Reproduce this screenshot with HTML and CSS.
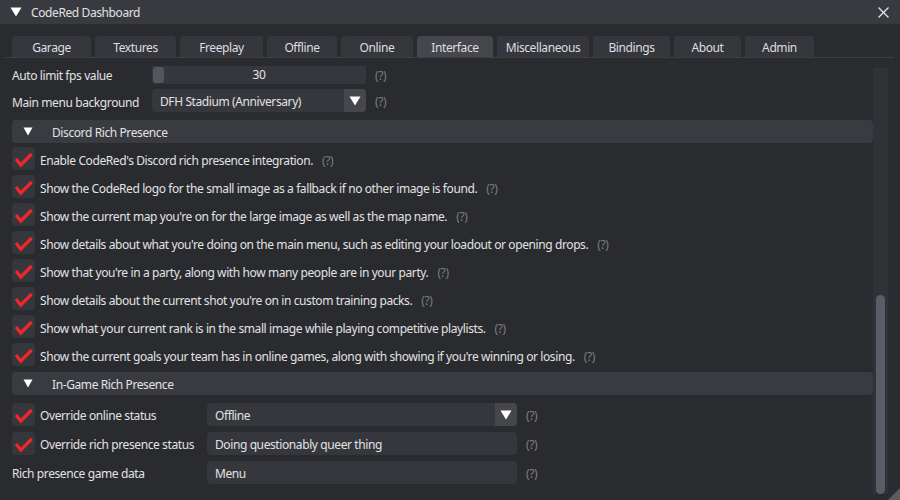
FILE: index.html
```html
<!DOCTYPE html>
<html>
<head>
<meta charset="utf-8">
<link rel="stylesheet" href="styles.css">
</head>
<body>
<div class="window">
  <div class="titlebar">
    <svg class="title-arrow" width="12" height="10" viewBox="0 0 12 10"><polygon points="0.5,0.5 11.5,0.5 6,9.5" fill="#ffffff"/></svg>
    <span class="title-text">CodeRed Dashboard</span>
    <svg class="close" width="11" height="11" viewBox="0 0 11 11"><path d="M0.5 0.5 L10.5 10.5 M10.5 0.5 L0.5 10.5" stroke="#e6e6e6" stroke-width="1.3"/></svg>
  </div>
  <div class="tabbar">
    <div class="tab t1">Garage</div>
    <div class="tab t2">Textures</div>
    <div class="tab t3">Freeplay</div>
    <div class="tab t4">Offline</div>
    <div class="tab t5">Online</div>
    <div class="tab t6 active">Interface</div>
    <div class="tab t7">Miscellaneous</div>
    <div class="tab t8">Bindings</div>
    <div class="tab t9">About</div>
    <div class="tab t10">Admin</div>
  </div>
  <div class="body">
    <div class="viewport">
      <div class="rows">
        <div class="row row-slider">
          <span class="label col1 short">Auto limit fps value</span>
          <div class="frame slider">
            <div class="grab"></div>
            <span class="slider-value">30</span>
          </div>
          <span class="help">(?)</span>
        </div>
        <div class="row row-combo">
          <span class="label col1">Main menu background</span>
          <div class="frame combo small">
            <span class="frame-text">DFH Stadium (Anniversary)</span>
            <div class="combo-btn"><svg width="12" height="10" viewBox="0 0 12 10"><polygon points="0.5,0.5 11.5,0.5 6,9.5" fill="#ffffff"/></svg></div>
          </div>
          <span class="help">(?)</span>
        </div>

        <div class="header h1">
          <svg class="hdr-arrow" width="10" height="9" viewBox="0 0 10 9"><polygon points="0.5,0.5 9.5,0.5 5,8.5" fill="#ffffff"/></svg>
          <span>Discord Rich Presence</span>
        </div>

        <div class="row cb-row first">
          <span class="checkbox"><svg width="23" height="23" viewBox="0 0 23 23"><polyline points="4,12 8.7,18 19.7,7" fill="none" stroke="#f0262b" stroke-width="3.2"/></svg></span>
          <span class="label">Enable CodeRed's Discord rich presence integration.</span>
          <span class="help">(?)</span>
        </div>
        <div class="row cb-row">
          <span class="checkbox"><svg width="23" height="23" viewBox="0 0 23 23"><polyline points="4,12 8.7,18 19.7,7" fill="none" stroke="#f0262b" stroke-width="3.2"/></svg></span>
          <span class="label">Show the CodeRed logo for the small image as a fallback if no other image is found.</span>
          <span class="help">(?)</span>
        </div>
        <div class="row cb-row">
          <span class="checkbox"><svg width="23" height="23" viewBox="0 0 23 23"><polyline points="4,12 8.7,18 19.7,7" fill="none" stroke="#f0262b" stroke-width="3.2"/></svg></span>
          <span class="label">Show the current map you're on for the large image as well as the map name.</span>
          <span class="help">(?)</span>
        </div>
        <div class="row cb-row">
          <span class="checkbox"><svg width="23" height="23" viewBox="0 0 23 23"><polyline points="4,12 8.7,18 19.7,7" fill="none" stroke="#f0262b" stroke-width="3.2"/></svg></span>
          <span class="label">Show details about what you're doing on the main menu, such as editing your loadout or opening drops.</span>
          <span class="help">(?)</span>
        </div>
        <div class="row cb-row">
          <span class="checkbox"><svg width="23" height="23" viewBox="0 0 23 23"><polyline points="4,12 8.7,18 19.7,7" fill="none" stroke="#f0262b" stroke-width="3.2"/></svg></span>
          <span class="label">Show that you're in a party, along with how many people are in your party.</span>
          <span class="help">(?)</span>
        </div>
        <div class="row cb-row">
          <span class="checkbox"><svg width="23" height="23" viewBox="0 0 23 23"><polyline points="4,12 8.7,18 19.7,7" fill="none" stroke="#f0262b" stroke-width="3.2"/></svg></span>
          <span class="label">Show details about the current shot you're on in custom training packs.</span>
          <span class="help">(?)</span>
        </div>
        <div class="row cb-row">
          <span class="checkbox"><svg width="23" height="23" viewBox="0 0 23 23"><polyline points="4,12 8.7,18 19.7,7" fill="none" stroke="#f0262b" stroke-width="3.2"/></svg></span>
          <span class="label">Show what your current rank is in the small image while playing competitive playlists.</span>
          <span class="help">(?)</span>
        </div>
        <div class="row cb-row">
          <span class="checkbox"><svg width="23" height="23" viewBox="0 0 23 23"><polyline points="4,12 8.7,18 19.7,7" fill="none" stroke="#f0262b" stroke-width="3.2"/></svg></span>
          <span class="label">Show the current goals your team has in online games, along with showing if you're winning or losing.</span>
          <span class="help">(?)</span>
        </div>

        <div class="header h2">
          <svg class="hdr-arrow" width="10" height="9" viewBox="0 0 10 9"><polygon points="0.5,0.5 9.5,0.5 5,8.5" fill="#ffffff"/></svg>
          <span>In-Game Rich Presence</span>
        </div>

        <div class="row field-row fr1">
          <div class="col2">
            <span class="checkbox"><svg width="23" height="23" viewBox="0 0 23 23"><polyline points="4,12 8.7,18 19.7,7" fill="none" stroke="#f0262b" stroke-width="3.2"/></svg></span>
            <span class="label">Override online status</span>
          </div>
          <div class="frame combo wide">
            <span class="frame-text">Offline</span>
            <div class="combo-btn"><svg width="12" height="10" viewBox="0 0 12 10"><polygon points="0.5,0.5 11.5,0.5 6,9.5" fill="#ffffff"/></svg></div>
          </div>
          <span class="help">(?)</span>
        </div>
        <div class="row field-row">
          <div class="col2">
            <span class="checkbox"><svg width="23" height="23" viewBox="0 0 23 23"><polyline points="4,12 8.7,18 19.7,7" fill="none" stroke="#f0262b" stroke-width="3.2"/></svg></span>
            <span class="label">Override rich presence status</span>
          </div>
          <div class="frame wide">
            <span class="frame-text">Doing questionably queer thing</span>
          </div>
          <span class="help">(?)</span>
        </div>
        <div class="row field-row">
          <div class="col2">
            <span class="label">Rich presence game data</span>
          </div>
          <div class="frame wide">
            <span class="frame-text">Menu</span>
          </div>
          <span class="help">(?)</span>
        </div>
      </div>
    </div>
    <div class="scrollbar">
      <div class="thumb"></div>
    </div>
  </div>
  <svg class="grip" width="12" height="12" viewBox="0 0 12 12"><polygon points="12,0 12,12 0,12" fill="#5c5d64"/></svg>
</div>
</body>
</html>
```
FILE: styles.css
```css
* {
  box-sizing: border-box;
}

html, body {
  margin: 0;
  padding: 0;
  background: #2a2b2f;
}

body {
  font-family: "Noto Sans", "Open Sans", sans-serif;
  font-size: 12px;
  letter-spacing: -0.4px;
  color: #e2e2e4;
}

.window {
  position: relative;
  width: 900px;
  height: 500px;
  background: #2a2b2f;
  overflow: hidden;
}

.titlebar {
  height: 24px;
  background: #393a40;
  display: flex;
  align-items: center;
  padding-left: 10px;
  padding-right: 11px;
}

.title-arrow {
  display: block;
}

.title-text {
  margin-left: 9px;
  flex: 1;
  line-height: 24px;
  padding-top: 1px;
}

.close {
  display: block;
}

.tabbar {
  margin: 12px 6px 0 4px;
  padding-left: 8px;
  display: flex;
  gap: 4px;
  border-bottom: 1px solid #3d3e44;
  height: 22px;
}

.tab {
  height: 21px;
  background: #36373c;
  border-radius: 4px 4px 0 0;
  display: flex;
  align-items: center;
  justify-content: center;
  line-height: 21px;
  padding-top: 1px;
  color: #dedee0;
}

.tab.active {
  background: #46474d;
}

.t1 { width: 79px; }
.t2 { width: 81px; }
.t3 { width: 83px; }
.t4 { width: 70px; }
.t5 { width: 72px; }
.t6 { width: 76px; }
.t7 { width: 92px; }
.t8 { width: 77px; }
.t9 { width: 67px; }
.t10 { width: 69px; }

.body {
  display: flex;
  margin-top: 8px;
  height: 431px;
}

.viewport {
  flex: 1;
  overflow: hidden;
  padding-left: 12px;
}

.rows {
  margin-top: -5px;
}

.row {
  display: flex;
  align-items: center;
  height: 23px;
}

.label {
  white-space: nowrap;
  line-height: 23px;
  padding-top: 2px;
}

.label.short {
  line-height: 16px;
  margin-top: 6px;
  padding-top: 0;
}

.row-combo .label {
  padding-top: 4px;
}

.col1 {
  width: 140px;
}

.frame {
  position: relative;
  height: 23px;
  background: #36373c;
  border-radius: 4px;
  display: flex;
  align-items: center;
}

.frame-text {
  padding-left: 8px;
  padding-top: 1px;
  flex: 1;
  white-space: nowrap;
}

.row-combo .frame-text {
  padding-top: 2px;
}

.slider {
  width: 214px;
  justify-content: center;
}

.grab {
  position: absolute;
  left: 1px;
  top: 6px;
  width: 11px;
  height: 16px;
  background: #55565d;
  border-radius: 3px;
}

.slider-value {
  position: relative;
  line-height: 16px;
  margin-top: 5px;
}

.row-combo {
  margin-top: 5px;
}

.small {
  width: 214px;
}

.wide {
  width: 310px;
}

.combo-btn {
  width: 22px;
  height: 23px;
  background: #46474d;
  border-radius: 0 4px 4px 0;
  display: flex;
  align-items: center;
  justify-content: center;
}

.combo-btn svg {
  display: block;
}

.help {
  color: #7c7d82;
  margin-left: 9px;
  padding-top: 2px;
  white-space: nowrap;
}

.row-slider .help {
  margin-top: 5px;
  padding-top: 0;
}

.header {
  height: 23px;
  background: #3a3b40;
  border-radius: 4px;
  display: flex;
  align-items: center;
  padding-left: 11px;
}

.header span {
  margin-left: 19px;
  padding-top: 1px;
}

.hdr-arrow {
  display: block;
}

.h1 {
  margin-top: 8px;
}

.h2 {
  margin-top: 6px;
}

.cb-row {
  margin-top: 5px;
}

.cb-row .label {
  padding-top: 3px;
}

.cb-row .help {
  padding-top: 3px;
}

.cb-row.first {
  margin-top: 4px;
}

.checkbox {
  width: 23px;
  height: 23px;
  flex: none;
  background: #36373c;
  border-radius: 4px;
  margin-right: 5px;
}

.checkbox svg {
  display: block;
}

.field-row {
  margin-top: 6px;
}

.field-row.fr1 {
  margin-top: 8px;
}

.col2 {
  width: 195px;
  display: flex;
  align-items: center;
}

.scrollbar {
  width: 15px;
  margin: 2px 12px 3px 0;
  background: #313237;
  border-radius: 0 3px 0 0;
  padding: 227px 3px 3px 3px;
}

.thumb {
  width: 9px;
  height: 199px;
  background: #5a5c66;
  border-radius: 5px;
}

.grip {
  position: absolute;
  right: 0;
  bottom: 0;
  display: block;
}
```
